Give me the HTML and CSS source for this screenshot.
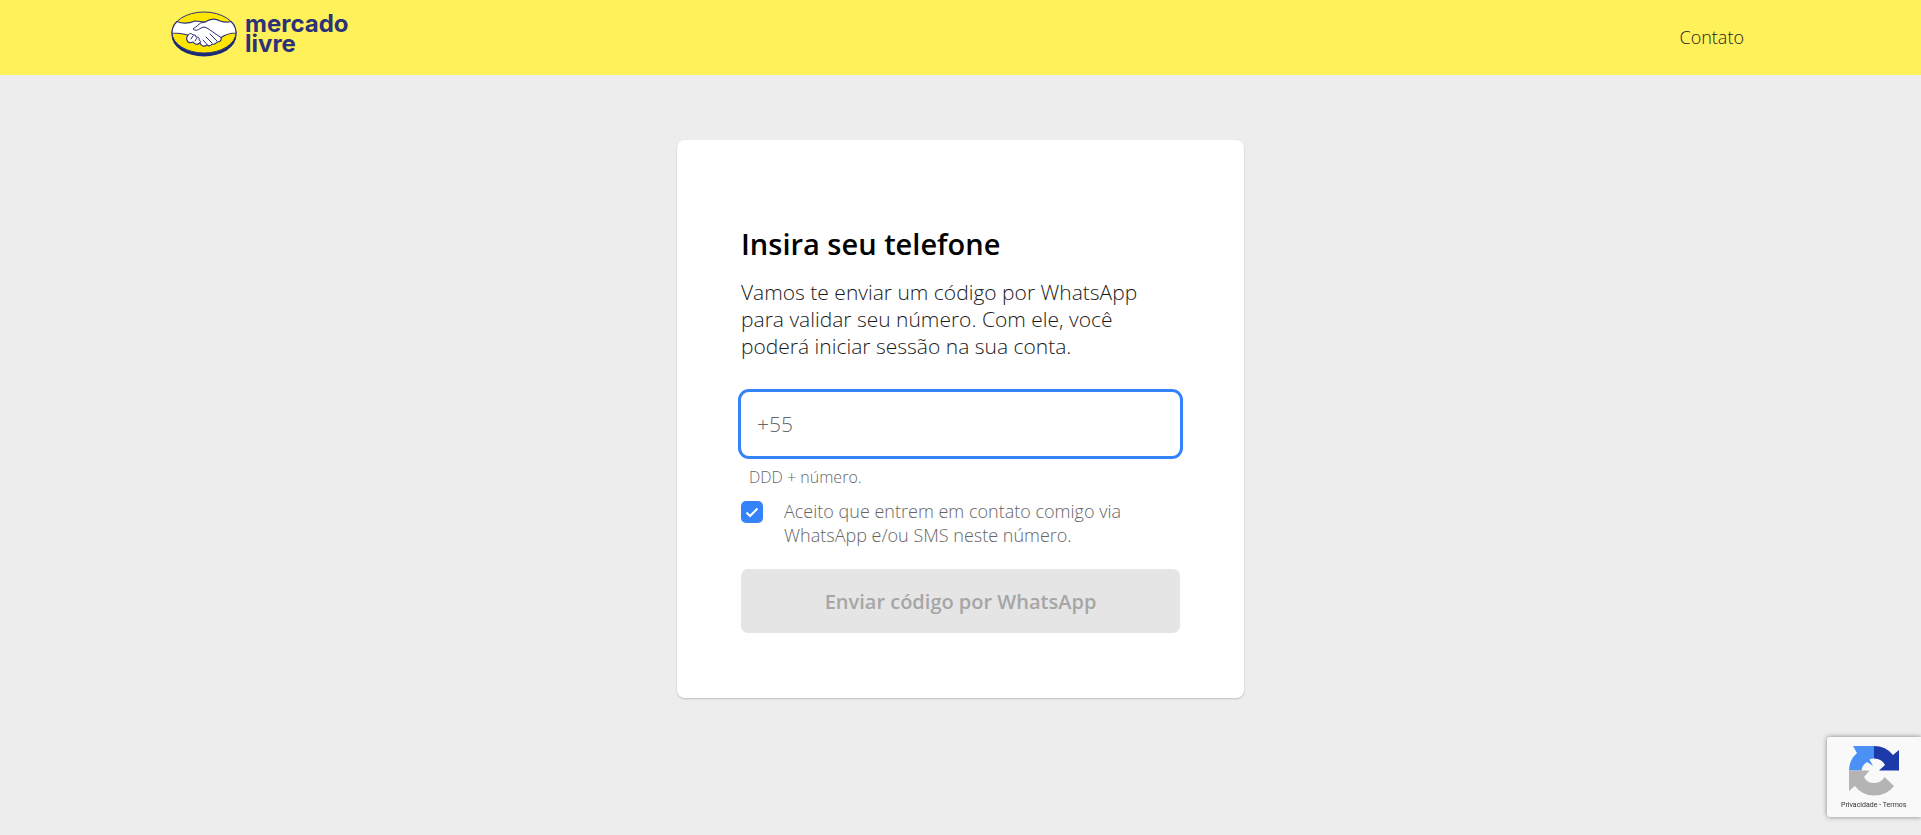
FILE: index.html
```html
<!DOCTYPE html>
<html lang="pt-BR">
<head>
<meta charset="utf-8">
<meta name="viewport" content="width=device-width, initial-scale=1">
<title>Insira seu telefone</title>
<link rel="stylesheet" href="styles.css">
</head>
<body>
<header class="header">
  <div class="header-inner">
    <a class="logo" href="#">
      <svg class="logo-mark" viewBox="0 0 66 46" aria-hidden="true">
        <ellipse cx="33" cy="24" rx="32.5" ry="21.5" fill="#1b2a78"/>
        <ellipse cx="33" cy="21.5" rx="32" ry="20.5" fill="#ffe600" stroke="#2d3277"/>
        <path d="M6 10.500Q14 14 24 10L34 11Q42 6 49 10Q55 12 60 10.500Q65 15 65 22Q57 22 50 26.500Q51 31 46 31Q44 34 41 33Q39 36 36 34Q31 37 29 32Q25 35 22 31Q17 33 16 29Q15 27 17 24Q10 22 1 22Q1 15 6 10.500Z" fill="#fff" stroke="#2d3277" stroke-width="1.200" stroke-linejoin="round"/>
        <path d="M34 11Q29 11 26 15L22 18Q25 21 30 17Q33 15 36 17L50 26.500M39 23L46 30M35 26L41 32M32 29L36 33.500M17 24Q20 21 22 24Q25 23 25 26Q29 26 28 29Q31 30 29 32M20 28L22 25M24 30L26 27" fill="none" stroke="#2d3277" stroke-linecap="round" stroke-linejoin="round"/>
      </svg>
      <span class="logo-name">mercado<br>livre</span>
    </a>
    <a class="contact" href="#">Contato</a>
  </div>
</header>
<main class="main">
  <form class="card">
    <h1 class="title">Insira seu telefone</h1>
    <p class="intro">Vamos te enviar um código por WhatsApp para validar seu número. Com ele, você poderá iniciar sessão na sua conta.</p>
    <input class="phone" id="phone" type="tel" placeholder="+55" aria-label="Telefone" aria-describedby="phone-help">
    <p class="help" id="phone-help">DDD + número.</p>
    <div class="consent">
      <input class="check" id="consent" type="checkbox" checked>
      <svg class="tick" viewBox="0 0 22 22" aria-hidden="true"><path d="M5.500 11.500L9 15L16.500 7.500" fill="none" stroke="#fff" stroke-width="2"/></svg>
      <label for="consent">Aceito que entrem em contato comigo via WhatsApp e/ou SMS neste número.</label>
    </div>
    <button class="submit" type="submit" disabled>Enviar código por WhatsApp</button>
  </form>
</main>
<aside class="captcha">
  <svg class="captcha-mark" viewBox="0 0 50 50" aria-hidden="true">
    <path d="M25 0V12.500Q22 12.500 20.500 13.500L24 20L18 16Q13 19 12.500 24.500H0Q0 14 8 7L4 0Z" fill="#4a90f5"/>
    <path d="M25 0Q37 0 44 9L50 4V24.500H30L36 19Q33 12.500 25 12.500Z" fill="#1c3aa9"/>
    <path d="M0 24.500H20.500L15 31Q18 37 25 37Q32 37 35.500 31L45 40Q38 49.500 25 49.500Q13 49.500 6 40L0 45Z" fill="#b4b4b4"/>
  </svg>
  <p class="captcha-links"><a href="#">Privacidade</a> - <a href="#">Termos</a></p>
</aside>
</body>
</html>
```
FILE: styles.css
```css
* { box-sizing: border-box; }
body {
  margin: 0;
  min-height: 100vh;
  background: #ededed;
  color: #1a1a1a;
  font-family: "Open Sans", sans-serif;
  font-weight: 300;
}
a { color: inherit; text-decoration: none; }
.header { background: #fff159; }
.header-inner {
  display: flex;
  justify-content: space-between;
  align-items: center;
  max-width: 1579px;
  height: 75px;
  margin: 0 auto;
}
.logo { display: flex; align-items: center; gap: 8px; padding-bottom: 8px; }
.logo-mark { width: 66px; height: 46px; }
.logo-name {
  color: #2d3277;
  font-family: Inter, sans-serif;
  font-size: 24px;
  font-weight: 700;
  line-height: 20px;
}
.contact { padding: 0 6px 2px 0; font-size: 18px; color: #222; }
.main { padding: 65px 16px; }
.card {
  max-width: 567px;
  margin: 0 auto;
  padding: 88px 64px 65px;
  background: #fff;
  border-radius: 8px;
  box-shadow: 0 1px 2px rgba(0, 0, 0, .2);
}
.title {
  margin: 0;
  color: #000;
  font-size: 29px;
  font-weight: 600;
  line-height: 32px;
}
.intro { margin: 19px 0 29px; padding-right: 24px; font-size: 21px; line-height: 27px; }
.phone {
  display: block;
  width: calc(100% + 6px);
  height: 70px;
  margin: 0 -3px;
  padding: 0 16px;
  border: 3px solid #3483fa;
  border-radius: 11px;
  outline: none;
  background: #fff;
  color: #333;
  font: inherit;
  font-size: 21px;
}
.phone::placeholder { color: #666; opacity: 1; }
.help { margin: 8px 8px 12px; color: #666; font-size: 16px; line-height: 20px; }
.consent {
  display: grid;
  grid-template-columns: 22px 1fr;
  column-gap: 21px;
  color: #666;
  font-size: 18px;
  line-height: 24px;
}
.check, .tick { grid-area: 1 / 1; width: 22px; height: 22px; margin: 2px 0 0; }
.check { appearance: none; border-radius: 5px; background: #3483fa; }
.tick { pointer-events: none; }
.consent label { grid-area: 1 / 2; padding-right: 32px; }
.submit {
  display: block;
  width: 100%;
  height: 64px;
  margin-top: 22px;
  border: 0;
  border-radius: 7px;
  background: #e5e5e5;
  color: #a6a6a6;
  font: inherit;
  font-size: 20px;
  font-weight: 600;
}
.captcha {
  position: fixed;
  right: 0;
  bottom: 18px;
  width: 94px;
  height: 80px;
  padding: 9px 14px 0;
  background: #f9f9f9;
  border-radius: 3px 0 0 3px;
  box-shadow: 0 0 5px gray;
}
.captcha-mark { display: block; width: 50px; height: 50px; margin-left: 8px; }
.captcha-links {
  margin: 4px 0 0;
  color: #333;
  font-family: Roboto, sans-serif;
  font-size: 7px;
  font-weight: 400;
  line-height: 10px;
  white-space: nowrap;
}
```
